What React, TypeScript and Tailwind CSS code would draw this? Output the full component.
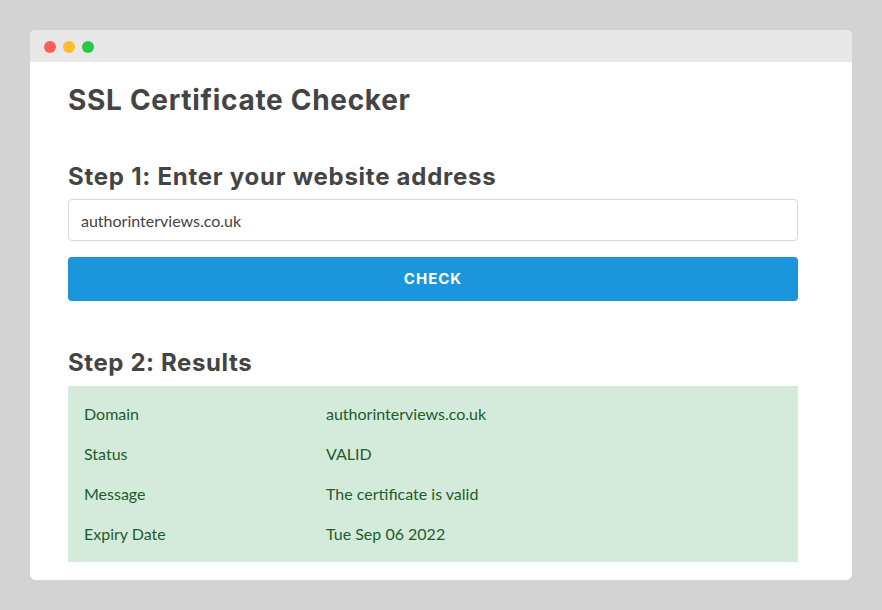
import React from 'react';

const rows = [
  ['Domain', 'authorinterviews.co.uk'],
  ['Status', 'VALID'],
  ['Message', 'The certificate is valid'],
  ['Expiry Date', 'Tue Sep 06 2022'],
];

export default function App() {
  return (
    <div className="w-[882px] h-[610px] bg-[#d3d3d3] p-[30px] font-['Lato','Liberation_Sans',sans-serif]">
      <div className="h-[550px] bg-white rounded-md overflow-hidden">
        {/* window chrome */}
        <div className="h-[32px] bg-[#e8e8e8] flex items-center gap-[7px] pl-[14px] pt-[1px]">
          <span className="w-3 h-3 rounded-full bg-[#fe5f57]" />
          <span className="w-3 h-3 rounded-full bg-[#febc2e]" />
          <span className="w-3 h-3 rounded-full bg-[#28c840]" />
        </div>

        <div className="pl-[38px] pr-[54px] pt-[20px]">
          <h1 className="font-['Inter',sans-serif] font-bold text-[28px] leading-[36px] tracking-[0.7px] text-[#444]">
            SSL Certificate Checker
          </h1>

          <h2 className="mt-[44px] font-['Inter',sans-serif] font-bold text-[24px] leading-[30px] tracking-[0.75px] text-[#444]">
            Step 1: Enter your website address
          </h2>
          <input
            className="mt-[7px] w-full h-[42px] border border-[#d9d9d9] rounded px-[12px] text-[16px] text-[#444] outline-none"
            defaultValue="authorinterviews.co.uk"
          />
          <button className="mt-[16px] w-full h-[44px] rounded bg-[#1b95db] text-white font-['Inter',sans-serif] font-bold text-[15px] tracking-[1px]">
            CHECK
          </button>

          <h2 className="mt-[47px] font-['Inter',sans-serif] font-bold text-[24px] leading-[30px] tracking-[0.6px] text-[#444]">
            Step 2: Results
          </h2>
          <div className="mt-[8px] bg-[#d4ebdb] py-[8px] pl-[16px] text-[16px] text-[#1e5c2c]">
            {rows.map(([k, v]) => (
              <div key={k} className="grid grid-cols-[242px_1fr] h-[40px] items-center">
                <span>{k}</span>
                <span>{v}</span>
              </div>
            ))}
          </div>
        </div>
      </div>
    </div>
  );
}
